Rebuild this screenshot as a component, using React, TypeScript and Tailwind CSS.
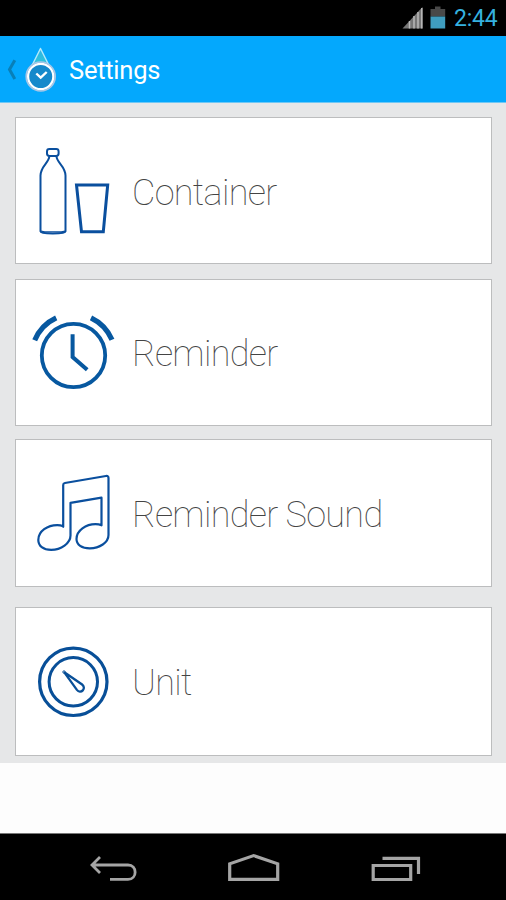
import React from 'react';

const BottleIcon = () => (
  <svg viewBox="30 140 90 100" className="w-[90px] h-[100px]" fill="none" stroke="#0a4f9e" strokeWidth="2">
    <rect x="47" y="149" width="11.6" height="7" rx="2.4" />
    <path d="M49.3 156.3c0 6-8.8 10-8.8 19.200V231.500c0 1.200 5 1.900 12.300 1.900s12.700-.7 12.700-1.900V175.500c0-9.200-9-13.200-9-19.200" />
    <path d="M40.500 231c3 1.200 22 1.200 25 0" strokeWidth="1.200" />
    <path d="M76.500 185h31.200l-4.400 46.800H81.500z" strokeWidth="3" />
  </svg>
);

const AlarmIcon = () => (
  <svg viewBox="30 310 90 90" className="w-[90px] h-[90px]" fill="none" stroke="#0758a0">
    <circle cx="73.500" cy="355.500" r="31.700" strokeWidth="3.800" />
    <path d="M72.600 334.300v22.700l14.600 12.700" strokeWidth="4" />
    <path d="M34.700 340.200a43 43 0 0 1 21.500-22.400M91 317.800a43 43 0 0 1 21 22" strokeWidth="5.200" />
  </svg>
);

const MusicIcon = () => (
  <svg viewBox="30 465 90 95" className="w-[90px] h-[95px]" fill="none" stroke="#0a4f9e" strokeWidth="2.200" strokeLinejoin="round">
    <path d="M63.200 526.800V485q0-1.700 1.700-2l41-7q2.600-.4 2.600 2v57c0 7.500-9 13.400-18.700 13.400-8 0-13.300-3.600-13.300-9.400 0-8.500 9.500-14.800 19-14.800 2.300 0 4.200.3 6 1.100v-27.600l-31 5.200v32.600c0 7.700-9.500 14.400-19.300 14.400-8 0-12.900-4.200-12.900-10 0-8.700 9.400-14.800 18.900-14.800 2.300 0 4.300.4 6 1.100z" />
  </svg>
);

const GaugeIcon = () => (
  <svg viewBox="30 640 90 85" className="w-[90px] h-[85px]" fill="none" stroke="#084f98" strokeWidth="3">
    <circle cx="73.300" cy="681.800" r="33.700" strokeWidth="3.200" />
    <circle cx="73.300" cy="681.800" r="24.200" />
    <path d="M64.300 672.300l17.800 12.200c2 1.600 2.400 4 .7 5.900-1.700 1.800-4.300 1.500-5.900-.5z" strokeWidth="2.300" />
    <circle cx="64" cy="672" r="1.200" strokeWidth="1" />
  </svg>
);

const StatusBar = () => (
  <div className="flex h-[36px] items-start justify-end bg-black pt-[5px] pr-[8px]">
    <svg viewBox="402 5 46 25" className="w-[46px] h-[25px]">
      <path d="M402.500 28.500L422.500 7v21.500z" fill="#767676" />
      <path d="M409.500 21v7.500M414 16v12.500M418 12v16.500M421.800 8v20.500" stroke="#b9b9b9" strokeWidth="1.500" />
      <path d="M430.500 9h4.500V6.500h5.500V9h4.700v7.500h-14.700z" fill="#494949" />
      <path d="M430.500 16.500h14.700v12h-14.700z" fill="#3f9dbf" />
    </svg>
    <span className="mt-[2px] ml-[6px] w-[44px] whitespace-nowrap text-[23px] leading-[24px] tracking-[-0.2px] text-[#35b1df]">
      2:44
    </span>
  </div>
);

const Header = () => (
  <header className="flex h-[67px] items-center border-b border-[#70c8f5] bg-[#04a8fd]">
    <svg viewBox="0 36 60 66" className="h-[66px] w-[60px] shrink-0" fill="none">
      <defs>
        <linearGradient id="drop" x1="0" y1="0" x2="0" y2="1">
          <stop offset="0" stopColor="#2fb4e6" />
          <stop offset="1" stopColor="#2bccd3" />
        </linearGradient>
      </defs>
      <path d="M14.800 60.300L9.500 69.500l5.300 9.500" stroke="#087fb8" strokeWidth="3" />
      <path d="M40.500 48.500L29 71.500h23z" fill="url(#drop)" stroke="#b5eafa" strokeWidth="1.400" strokeLinejoin="round" />
      <circle cx="40.700" cy="76.500" r="14.500" fill="#1589cb" stroke="#a9c6e6" strokeWidth="1.600" />
      <circle cx="40.700" cy="76.500" r="12.600" stroke="#fff" strokeWidth="2.200" />
      <path d="M36.300 73.500l4.400 4.200 6-5.700" stroke="#fff" strokeWidth="2.400" />
    </svg>
    <h1 className="mt-[4px] ml-[9px] text-[25.500px] leading-none tracking-[-0.25px] text-white">Settings</h1>
  </header>
);

interface SettingCardProps {
  label: string;
  icon: React.ReactNode;
  className: string;
  labelClassName: string;
}

const SettingCard = ({ label, icon, className, labelClassName }: SettingCardProps) => (
  <button className={`flex w-full items-start border border-[#bcbdbe] bg-white pl-[14px] text-left ${className}`}>
    {icon}
    <span
      className={`ml-[12px] whitespace-nowrap text-[36px] font-thin leading-[44px] tracking-[-0.67px] text-[#444] ${labelClassName}`}
    >
      {label}
    </span>
  </button>
);

const NavBar = () => (
  <nav className="flex h-[67px] items-start justify-between border-t border-[#777] bg-black pt-[19px] pl-[88px] pr-[84px]">
    <svg viewBox="88 853 50 32" className="h-[32px] w-[50px]" fill="none" stroke="#a5a5a5" strokeWidth="2.800">
      <path d="M100 857l-8 8 8 8M92 865h36c9.500 0 9.500 14.400 0 14.400h-18" />
    </svg>
    <svg viewBox="226 853 56 32" className="h-[32px] w-[56px]" fill="none" stroke="#a5a5a5" strokeWidth="3.200">
      <path d="M229.700 879.400v-15.600l24-8.200 24 8.200v15.600z" />
    </svg>
    <svg viewBox="370 853 52 32" className="h-[32px] w-[52px]" fill="none" stroke="#a5a5a5" strokeWidth="3.200">
      <path d="M373.200 865.500h37.500v14h-37.500zM382.500 858.300h36v15.700" />
    </svg>
  </nav>
);

export default function App() {
  return (
    <div className="flex h-[900px] w-[506px] flex-col overflow-hidden bg-[#fdfdfd] font-[Roboto,sans-serif]">
      <StatusBar />
      <Header />
      <main className="flex h-[660px] flex-col bg-[#e6e7e8] pt-[14px] pl-[15px] pr-[14px]">
        <SettingCard
          label="Container"
          icon={<BottleIcon />}
          className="h-[147px] pt-[22px]"
          labelClassName="mt-[31px]"
        />
        <SettingCard
          label="Reminder"
          icon={<AlarmIcon />}
          className="mt-[15px] h-[147px] pt-[30px]"
          labelClassName="mt-[22px]"
        />
        <SettingCard
          label="Reminder Sound"
          icon={<MusicIcon />}
          className="mt-[13px] h-[148px] pt-[25px]"
          labelClassName="mt-[28px]"
        />
        <SettingCard
          label="Unit"
          icon={<GaugeIcon />}
          className="mt-[20px] h-[149px] pt-[32px]"
          labelClassName="mt-[21px]"
        />
      </main>
      <div className="h-[70px] bg-[#fdfdfd]" />
      <NavBar />
    </div>
  );
}
